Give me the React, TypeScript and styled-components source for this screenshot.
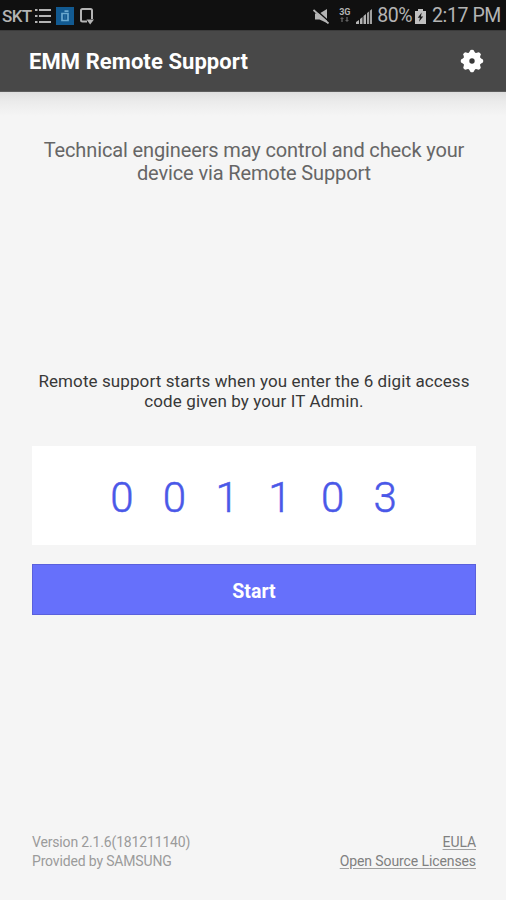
import React from "react";
import styled, { createGlobalStyle } from "styled-components";

const GlobalStyle = createGlobalStyle`
  * { box-sizing: border-box; }
  body { margin: 0; background: #f5f5f5; font-family: Roboto, sans-serif; }
  p { margin: 0; }
`;

const Screen = styled.div`
  width: 506px;
  height: 900px;
  display: flex;
  flex-direction: column;
  background: #f5f5f5;
  overflow: hidden;
`;

const StatusBar = styled.div`
  height: 30px;
  flex: none;
  display: flex;
  align-items: center;
  justify-content: space-between;
  padding: 2px 5px 0 2px;
  background: #101010;
  color: #b4b4b4;
  white-space: nowrap;
`;

const StatusGroup = styled.div`
  display: flex;
  align-items: center;
  svg { display: block; flex: none; }
`;

const StatusText = styled.span<{ $size: number; $spacing?: number; $weight?: number }>`
  font-size: ${(p) => p.$size}px;
  line-height: 24px;
  font-weight: ${(p) => p.$weight ?? 400};
  letter-spacing: ${(p) => p.$spacing ?? 0}px;
`;

const Gap = styled.span<{ $w: number }>`
  width: ${(p) => p.$w}px;
`;

const AppBar = styled.header`
  height: 62px;
  flex: none;
  display: flex;
  align-items: center;
  justify-content: space-between;
  padding: 0 22px 0 29px;
  background: #484848;
  border-top: 1px solid #3b3b3b;
  border-bottom: 1px solid #5c5c5c;
`;

const Title = styled.h1`
  margin: 0;
  padding-top: 2px;
  font-size: 22px;
  line-height: 26px;
  font-weight: 700;
  letter-spacing: 0.07px;
  color: #fff;
`;

const IconButton = styled.button`
  width: 24px;
  height: 24px;
  padding: 0;
  border: 0;
  background: none;
  svg { display: block; }
`;

const Shade = styled.div`
  height: 24px;
  flex: none;
  background: linear-gradient(#dedede, #ebebeb 40%, #f5f5f5);
`;

const Main = styled.main`
  flex: 1;
  display: flex;
  flex-direction: column;
  padding: 23px 30px 29px 32px;
`;

const Lead = styled.p`
  height: 232px;
  text-align: center;
  white-space: nowrap;
  font-size: 20px;
  line-height: 23px;
  color: #666;
`;

const Instruction = styled.p`
  height: 75px;
  text-align: center;
  white-space: nowrap;
  font-size: 17px;
  line-height: 20px;
  color: #383838;
`;

const Line = styled.span<{ $spacing: number }>`
  display: block;
  letter-spacing: ${(p) => p.$spacing}px;
`;

const CodeBox = styled.div`
  height: 99px;
  display: flex;
  justify-content: center;
  align-items: center;
  padding: 4px 1px 0 0;
  background: #fff;
`;

const Digit = styled.span`
  width: 52.7px;
  text-align: center;
  font-size: 42px;
  line-height: 50px;
  font-weight: 300;
  color: #4a58e8;
  -webkit-text-stroke: 0.5px #4a58e8;
`;

const StartButton = styled.button`
  height: 51px;
  margin-top: 19px;
  padding: 4px 0 0;
  border: 1px solid #5a60dc;
  background: #6670fb;
  color: #fff;
  font: 700 19.5px/24px Roboto, sans-serif;
`;

const Footer = styled.footer`
  margin-top: auto;
  display: flex;
  justify-content: space-between;
  font-size: 14px;
  line-height: 19px;
  letter-spacing: -0.16px;
  color: #9b9b9b;
  white-space: nowrap;
`;

const Links = styled.div`
  display: flex;
  flex-direction: column;
  align-items: flex-end;
  letter-spacing: -0.1px;
`;

const FooterLink = styled.a`
  color: #808080;
  text-decoration: underline;
  text-decoration-color: #a0a0a0;
  text-underline-offset: 2px;
`;

const ListIcon = () => (
  <svg width="16" height="16" viewBox="0 0 16 16" fill="#b4b4b4">
    <path d="M0 1h2.5v2H0zM4 1h12v2H4zM0 7h2.5v2H0zM4 7h12v2H4zM0 13h2.5v2H0zM4 13h12v2H4z" />
  </svg>
);

const DeviceIcon = () => (
  <svg width="18" height="18" viewBox="0 0 18 18">
    <rect width="18" height="18" fill="#125a91" />
    <path d="M6 6.5h6v7H6zM8.5 4.2h4" fill="none" stroke="#6aa9cf" strokeWidth="1.7" />
    <path d="M9 7.5v4.5" stroke="#3277a7" strokeWidth="1" />
  </svg>
);

const TransferIcon = () => (
  <svg width="14" height="17" viewBox="0 0 14 17">
    <path d="M7 13.5H2.5Q1 13.5 1 12V2.5Q1 1 2.5 1h8Q12 1 12 2.5V11" fill="none" stroke="#b4b4b4" strokeWidth="2" />
    <path d="M6.5 11.5H14L10.2 16.5z" fill="#b4b4b4" />
  </svg>
);

const MuteIcon = () => (
  <svg width="17" height="15" viewBox="0 0 17 15">
    <path d="M2 4.5h4.5L14 0v14L6.5 10.5H2z" fill="#b4b4b4" />
    <path d="M2 0 17 13.5" stroke="#101010" strokeWidth="1.4" />
    <path d="M.5 1 15.5 14.5" stroke="#b4b4b4" strokeWidth="1.7" />
  </svg>
);

const NetworkBadge = styled.div`
  width: 13px;
  height: 16px;
  display: flex;
  flex-direction: column;
  align-items: center;
  font-size: 9px;
  line-height: 9px;
  font-weight: 700;
`;

const DataArrows = () => (
  <svg width="9" height="5" viewBox="0 0 9 5" fill="#606060">
    <path d="M2 0 4 2H2.7v3H1.3V2H0zM6.3 0h1.4v3H9L7 5 5 3h1.3z" />
  </svg>
);

const SignalIcon = () => (
  <svg width="16" height="15" viewBox="0 0 16 15">
    <path d="M0 15v-2l3-2v4zM4 15v-5l2.5-2v7zM7.5 15V7L10 5v10z" fill="#b4b4b4" />
    <path d="M11 15V4l2-1.6V15zM13.8 15V1.8L16 0v15z" fill="#a0a0a0" />
  </svg>
);

const BatteryIcon = () => (
  <svg width="11" height="15" viewBox="0 0 11 15">
    <path d="M3 0h5v2h3v13H0V2h3z" fill="#c0c0c0" />
    <path d="M6.7 3.5 2.7 8.7h2.2L4 12.8l4.2-5.4H5.9z" fill="#181818" />
  </svg>
);

const GearIcon = () => (
  <svg width="24" height="24" viewBox="0 0 24 24">
    <g fill="#fff">
      <circle cx="12" cy="12" r="9" />
      {[0, 45, 90, 135, 180, 225, 270, 315].map((angle) => (
        <path key={angle} d="M8.3 5 10.5 1.1Q12 .3 13.5 1.1L15.7 5z" transform={`rotate(${angle} 12 12)`} />
      ))}
    </g>
    <circle cx="12" cy="12" r="2.7" fill="#383838" />
  </svg>
);

export default function App() {
  return (
    <>
      <GlobalStyle />
      <Screen>
        <StatusBar>
          <StatusGroup>
            <StatusText $size={17} $weight={500} $spacing={-0.6}>SKT</StatusText>
            <Gap $w={3} />
            <ListIcon />
            <Gap $w={5} />
            <DeviceIcon />
            <Gap $w={6} />
            <TransferIcon />
          </StatusGroup>
          <StatusGroup>
            <MuteIcon />
            <Gap $w={8} />
            <NetworkBadge>
              3G
              <DataArrows />
            </NetworkBadge>
            <Gap $w={5} />
            <SignalIcon />
            <Gap $w={5} />
            <StatusText $size={19.5} $spacing={-0.5}>80%</StatusText>
            <Gap $w={3} />
            <BatteryIcon />
            <Gap $w={6} />
            <StatusText $size={19.5} $spacing={-0.4}>2:17 PM</StatusText>
          </StatusGroup>
        </StatusBar>
        <AppBar>
          <Title>EMM Remote Support</Title>
          <IconButton aria-label="Settings">
            <GearIcon />
          </IconButton>
        </AppBar>
        <Shade />
        <Main>
          <Lead>
            <Line $spacing={-0.13}>Technical engineers may control and check your</Line>
            <Line $spacing={-0.13}>device via Remote Support</Line>
          </Lead>
          <Instruction>
            <Line $spacing={0.1}>Remote support starts when you enter the 6 digit access</Line>
            <Line $spacing={0.1}>code given by your IT Admin.</Line>
          </Instruction>
          <CodeBox>
            {"001103".split("").map((digit, index) => (
              <Digit key={index}>{digit}</Digit>
            ))}
          </CodeBox>
          <StartButton>Start</StartButton>
          <Footer>
            <div>
              <p>Version 2.1.6(181211140)</p>
              <p>Provided by SAMSUNG</p>
            </div>
            <Links>
              <FooterLink>EULA</FooterLink>
              <FooterLink>Open Source Licenses</FooterLink>
            </Links>
          </Footer>
        </Main>
      </Screen>
    </>
  );
}
